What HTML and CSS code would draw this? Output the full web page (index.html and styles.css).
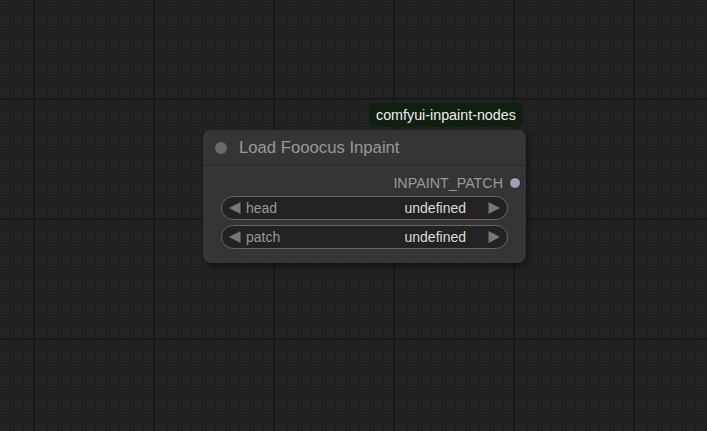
FILE: index.html
```html
<!DOCTYPE html>
<html lang="en">
<head>
    <meta charset="UTF-8">
    <title>Load Fooocus Inpaint</title>
    <link rel="stylesheet" href="styles.css">
</head>
<body>
    <div class="canvas">
        <div class="badge">comfyui-inpaint-nodes</div>
        <div class="node">
            <div class="title">
                <span class="title-dot"></span>
                <span class="title-text">Load Fooocus Inpaint</span>
            </div>
            <div class="body">
                <div class="output">
                    <span>INPAINT_PATCH</span>
                    <span class="slot"></span>
                </div>
                <div class="widget">
                    <svg class="arrow" width="12" height="12" viewBox="0 0 12 12"><polygon points="11.5,0 11.5,12 0,6"/></svg>
                    <span class="label">head</span>
                    <span class="value">undefined</span>
                    <svg class="arrow" width="12" height="12" viewBox="0 0 12 12"><polygon points="0.5,0 0.5,12 12,6"/></svg>
                </div>
                <div class="widget">
                    <svg class="arrow" width="12" height="12" viewBox="0 0 12 12"><polygon points="11.5,0 11.5,12 0,6"/></svg>
                    <span class="label">patch</span>
                    <span class="value">undefined</span>
                    <svg class="arrow" width="12" height="12" viewBox="0 0 12 12"><polygon points="0.5,0 0.5,12 12,6"/></svg>
                </div>
            </div>
        </div>
    </div>
</body>
</html>
```

FILE: styles.css
```css
html,body{
    margin:0;
    height:100%;
}
body{
    font-family:"Liberation Sans",Arial,sans-serif;
    background-color:#222;
    overflow:hidden;
}
.canvas{
    position:relative;
    width:100%;
    height:100%;
    background-color:#222;
    background-image:
        linear-gradient(to right,#191919 2px,transparent 2px),
        linear-gradient(to bottom,#191919 2px,transparent 2px),
        linear-gradient(to right,#1c1c1c 1px,transparent 1px),
        linear-gradient(to bottom,#1c1c1c 1px,transparent 1px);
    background-size:120px 120px,120px 120px,12px 12px,12px 12px;
    background-position:33px 98px,33px 98px,10px 3px,10px 3px;
}
.badge{
    position:absolute;
    left:369px;
    top:103px;
    height:24px;
    padding:0 7px;
    border-radius:6px;
    background-color:#0f1f10;
    color:#eee;
    font-size:14.3px;
    line-height:24px;
}
.node{
    position:absolute;
    left:203px;
    top:130px;
    width:323px;
    height:133px;
    border-radius:8px;
    background-color:#353535;
    box-shadow:2px 3px 5px rgba(0,0,0,0.45);
}
.title{
    display:flex;
    align-items:center;
    height:35px;
    padding-left:12px;
    border-bottom:1px solid #2a2a2a;
}
.title-dot{
    width:12px;
    height:12px;
    border-radius:50%;
    background-color:#6a6a6a;
}
.title-text{
    margin-left:12px;
    color:#999;
    font-size:16.7px;
}
.body{
    padding:7px 18px 0;
}
.output{
    display:flex;
    justify-content:flex-end;
    align-items:center;
    gap:6px;
    height:20px;
    margin-right:-12px;
    color:#999;
    font-size:14.3px;
}
.slot{
    width:10px;
    height:10px;
    margin-right:-1px;
    border-radius:50%;
    background-color:#a0a0b8;
    border:1px solid #1e1e1e;
}
.widget{
    display:flex;
    align-items:center;
    height:22px;
    margin-top:3px;
    padding:0 7px;
    border:1px solid #666;
    border-radius:12px;
    background-color:#222;
    font-size:14px;
}
.widget + .widget{
    margin-top:5px;
}
.arrow{
    fill:#777;
}
.label{
    flex:1;
    margin-left:5px;
    color:#999;
}
.value{
    margin-right:22px;
    color:#ddd;
}
```
